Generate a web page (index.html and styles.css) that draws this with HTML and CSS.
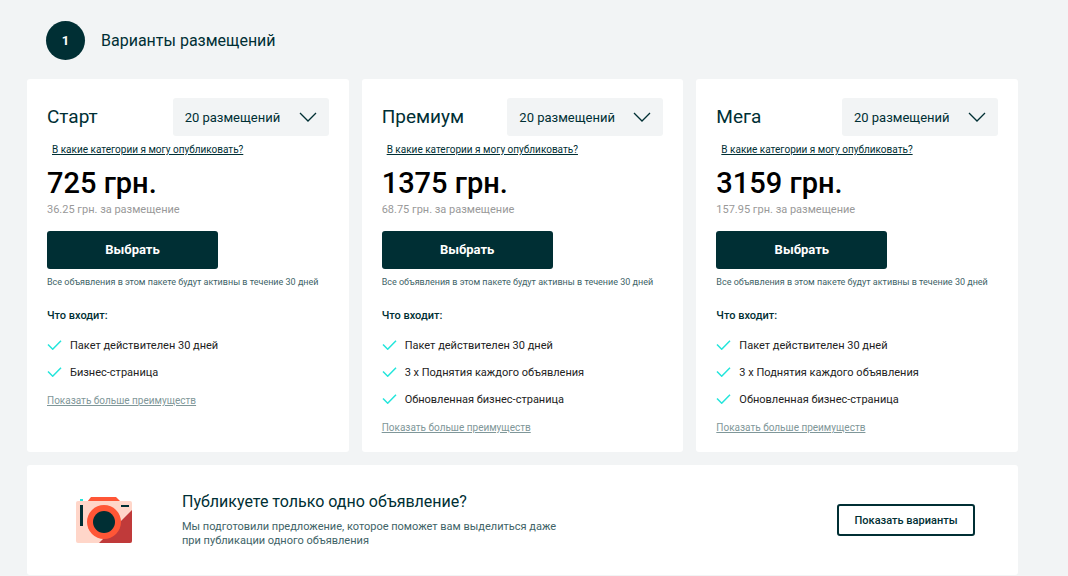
FILE: index.html
```html
<!DOCTYPE html>
<html lang="ru">
<head>
<meta charset="utf-8">
<meta name="viewport" content="width=device-width, initial-scale=1">
<title>Варианты размещений</title>
<link rel="stylesheet" href="styles.css">
</head>
<body>
<svg width="0" height="0" class="sprite" aria-hidden="true">
  <symbol id="chevron" viewBox="0 0 18 10"><path d="M1 1l8 8 8-8" fill="none" stroke="currentColor" stroke-width="1.3"/></symbol>
  <symbol id="check" viewBox="0 0 14 10"><path d="M.5 4.5l4.7 4.7L13.5.7" fill="none" stroke="currentColor" stroke-width="1.5"/></symbol>
</svg>
<main class="page">
  <header class="step">
    <span class="step-number">1</span>
    <h1 class="step-title">Варианты размещений</h1>
  </header>

  <section class="plans">
    <article class="card">
      <div class="card-head">
        <h2 class="plan-name">Старт</h2>
        <div class="picker">
          <select class="picker-select" aria-label="Количество размещений, Старт"><option>20 размещений</option></select>
          <svg class="picker-icon" aria-hidden="true"><use href="#chevron"/></svg>
        </div>
      </div>
      <a class="categories" href="#">В какие категории я могу опубликовать?</a>
      <p class="price">725 грн.</p>
      <p class="unit-price">36.25 грн. за размещение</p>
      <button class="choose" type="button">Выбрать</button>
      <p class="note">Все объявления в этом пакете будут активны в течение 30 дней</p>
      <h3 class="includes">Что входит:</h3>
      <ul class="features">
        <li class="feature"><svg class="check" aria-hidden="true"><use href="#check"/></svg>Пакет действителен 30 дней</li>
        <li class="feature"><svg class="check" aria-hidden="true"><use href="#check"/></svg>Бизнес-страница</li>
      </ul>
      <a class="more" href="#">Показать больше преимуществ</a>
    </article>

    <article class="card">
      <div class="card-head">
        <h2 class="plan-name">Премиум</h2>
        <div class="picker">
          <select class="picker-select" aria-label="Количество размещений, Премиум"><option>20 размещений</option></select>
          <svg class="picker-icon" aria-hidden="true"><use href="#chevron"/></svg>
        </div>
      </div>
      <a class="categories" href="#">В какие категории я могу опубликовать?</a>
      <p class="price">1375 грн.</p>
      <p class="unit-price">68.75 грн. за размещение</p>
      <button class="choose" type="button">Выбрать</button>
      <p class="note">Все объявления в этом пакете будут активны в течение 30 дней</p>
      <h3 class="includes">Что входит:</h3>
      <ul class="features">
        <li class="feature"><svg class="check" aria-hidden="true"><use href="#check"/></svg>Пакет действителен 30 дней</li>
        <li class="feature"><svg class="check" aria-hidden="true"><use href="#check"/></svg>3 x Поднятия каждого объявления</li>
        <li class="feature"><svg class="check" aria-hidden="true"><use href="#check"/></svg>Обновленная бизнес-страница</li>
      </ul>
      <a class="more" href="#">Показать больше преимуществ</a>
    </article>

    <article class="card">
      <div class="card-head">
        <h2 class="plan-name">Мега</h2>
        <div class="picker">
          <select class="picker-select" aria-label="Количество размещений, Мега"><option>20 размещений</option></select>
          <svg class="picker-icon" aria-hidden="true"><use href="#chevron"/></svg>
        </div>
      </div>
      <a class="categories" href="#">В какие категории я могу опубликовать?</a>
      <p class="price">3159 грн.</p>
      <p class="unit-price">157.95 грн. за размещение</p>
      <button class="choose" type="button">Выбрать</button>
      <p class="note">Все объявления в этом пакете будут активны в течение 30 дней</p>
      <h3 class="includes">Что входит:</h3>
      <ul class="features">
        <li class="feature"><svg class="check" aria-hidden="true"><use href="#check"/></svg>Пакет действителен 30 дней</li>
        <li class="feature"><svg class="check" aria-hidden="true"><use href="#check"/></svg>3 x Поднятия каждого объявления</li>
        <li class="feature"><svg class="check" aria-hidden="true"><use href="#check"/></svg>Обновленная бизнес-страница</li>
      </ul>
      <a class="more" href="#">Показать больше преимуществ</a>
    </article>
  </section>

  <section class="single">
    <svg class="camera" viewBox="0 0 56 46" aria-hidden="true">
      <rect x="4" y="2" width="3" height="3" fill="#23e5db"/>
      <path d="M11 5l4-5h25l5 5z" fill="#ff5636"/>
      <rect y="4" width="56" height="42" rx="2" fill="#ffd6c9"/>
      <path d="M56 13v31a2 2 0 0 1-2 2H23z" fill="#c03a3a"/>
      <rect x="4" y="8" width="3" height="21" fill="#002f34"/>
      <rect x="45" y="8" width="8" height="2" fill="#002f34"/>
      <circle cx="28" cy="25" r="17" fill="#ff5636"/>
      <circle cx="28" cy="25" r="11" fill="#002f34"/>
    </svg>
    <div class="single-text">
      <h2 class="single-title">Публикуете только одно объявление?</h2>
      <p class="single-desc">Мы подготовили предложение, которое поможет вам выделиться даже при публикации одного объявления</p>
    </div>
    <button class="show-options" type="button">Показать варианты</button>
  </section>
</main>
</body>
</html>
```
FILE: styles.css
```css
* { box-sizing: border-box; }

body {
  margin: 0;
  background: #f2f4f5;
  color: #002f34;
  font-family: Roboto, "Noto Sans", sans-serif;
  font-size: 11px;
}

h1, h2, h3, p, ul { margin: 0; padding: 0; font-weight: 400; }
button, select { font-family: inherit; cursor: pointer; }

.sprite { position: absolute; }

.page { padding: 21px 50px 1px 27px; }

.step {
  display: flex;
  align-items: center;
  gap: 16px;
  padding-left: 19px;
  margin-bottom: 19px;
}
.step-number {
  display: grid;
  place-items: center;
  width: 39px;
  height: 39px;
  border-radius: 50%;
  background: #002f34;
  color: #fff;
  font-size: 13px;
  font-weight: 700;
}
.step-title { font-size: 16px; }

.plans {
  display: grid;
  grid-template-columns: repeat(3, minmax(0, 1fr));
  gap: 13px;
  margin-bottom: 13px;
}
.card {
  display: flex;
  flex-direction: column;
  align-items: flex-start;
  padding: 19px 20px 17px;
  border-radius: 3px;
  background: #fff;
}
.card-head {
  display: flex;
  align-items: center;
  justify-content: space-between;
  align-self: stretch;
}
.plan-name { font-size: 19px; line-height: 38px; }

.picker { position: relative; }
.picker-select {
  appearance: none;
  width: 156px;
  height: 38px;
  padding: 0 40px 0 12px;
  border: 0;
  border-radius: 3px;
  background: #f2f4f5;
  color: #002f34;
  font-size: 13px;
}
.picker-icon {
  position: absolute;
  top: 14px;
  right: 12px;
  width: 18px;
  height: 10px;
  pointer-events: none;
}

.categories {
  margin: 7px 0 0 5px;
  color: #002f34;
  font-size: 10px;
  line-height: 14px;
}
.price {
  margin-top: 9px;
  color: #000;
  font-size: 29px;
  font-weight: 500;
  line-height: 34px;
}
.unit-price { margin-top: 2px; color: #999; line-height: 16px; }
.choose {
  width: 171px;
  height: 38px;
  margin-top: 13px;
  padding: 0 0 2px;
  border: 0;
  border-radius: 3px;
  background: #002f34;
  color: #fff;
  font-size: 13px;
  font-weight: 700;
}
.note { margin-top: 6px; color: #406367; font-size: 9px; line-height: 14px; }
.includes { margin-top: 19px; font-size: 11px; font-weight: 500; line-height: 16px; }
.features { margin-top: 8px; list-style: none; }
.feature {
  display: flex;
  align-items: center;
  gap: 8px;
  color: #222;
  line-height: 27px;
}
.check { width: 15px; height: 12px; padding-bottom: 2px; color: #23e5db; }
.more { margin-top: 8px; color: #7f9799; font-size: 10px; line-height: 14px; }

.single {
  display: flex;
  align-items: center;
  min-height: 110px;
  padding: 20px 43px 20px 49px;
  border-radius: 3px;
  background: #fff;
}
.camera { flex: none; width: 56px; height: 46px; }
.single-text { flex: 1; padding: 0 20px 0 50px; }
.single-title { font-size: 16px; line-height: 20px; }
.single-desc { max-width: 388px; margin-top: 8px; color: #406367; line-height: 14px; }
.show-options {
  width: 138px;
  height: 32px;
  border: 2px solid #002f34;
  border-radius: 3px;
  background: #fff;
  color: #002f34;
  font-size: 11px;
  font-weight: 500;
}
```
